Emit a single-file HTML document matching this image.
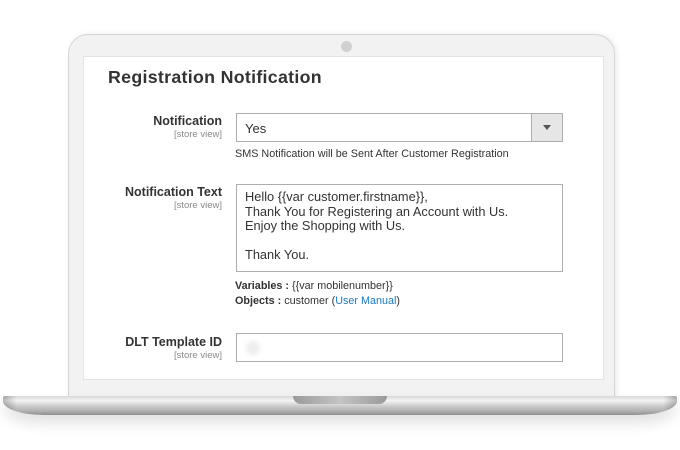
<!DOCTYPE html>
<html><head><meta charset="utf-8"><style>
*{margin:0;padding:0;box-sizing:border-box}
body{width:680px;height:450px;background:#fff;position:relative;overflow:hidden;font-family:"Liberation Sans",sans-serif;color:#303030}
.bezel{position:absolute;left:68px;top:34px;width:547px;height:365px;background:#f2f2f2;border:1px solid #d6d6d6;border-radius:20px 20px 0 0;box-shadow:2px 0 6px rgba(0,0,0,.08)}
.cam{position:absolute;left:341px;top:41px;width:11px;height:11px;border-radius:50%;background:#d0d0d0}
.screen{position:absolute;left:83px;top:56px;width:521px;height:324px;background:#fff;border:1px solid #e4e4e4}
.base{position:absolute;left:3px;top:396px;width:674px;height:19px;border-radius:2px 2px 40px 40px/2px 2px 14px 14px;background:linear-gradient(90deg,rgba(0,0,0,.25),rgba(0,0,0,0) 2%,rgba(0,0,0,0) 98%,rgba(0,0,0,.25)),linear-gradient(#d8d8d8,#f4f4f4 25%,#cfcfcf 50%,#b0b0b0 80%,#8f8f8f);box-shadow:0 8px 14px rgba(0,0,0,.12)}
.notch{position:absolute;left:293px;top:396px;width:94px;height:8px;border-radius:0 0 8px 8px;background:linear-gradient(90deg,#9a9a9a,#c4c4c4 50%,#9a9a9a)}
.t{position:absolute;white-space:nowrap}
h1{position:absolute;left:108px;top:67px;font-size:17.8px;font-weight:bold;color:#333;letter-spacing:.3px}
.lab{position:absolute;right:458px;text-align:right;font-size:12.5px;font-weight:bold;color:#333}
.lab span{display:block;font-size:9.5px;font-weight:normal;color:#8a8a8a;margin-top:1px}
.box{position:absolute;left:236px;width:327px;border:1px solid #adadad;background:#fff}
.small{font-size:10.8px;color:#333}
a{color:#1979c3;text-decoration:none}
</style></head><body>
<div class="bezel"></div>
<div class="cam"></div>
<div class="screen"></div>
<h1>Registration Notification</h1>
<div class="lab" style="top:114px">Notification<span>[store view]</span></div>
<div class="box" style="top:113px;height:29px"><div class="t" style="left:8px;top:7px;font-size:13px">Yes</div>
<div style="position:absolute;right:0;top:0;width:31px;height:27px;background:#e6e6e6;border-left:1px solid #adadad"><div style="position:absolute;left:11px;top:11px;border-left:4px solid transparent;border-right:4px solid transparent;border-top:5px solid #555"></div></div></div>
<div class="t small" style="left:235px;top:148px">SMS Notification will be Sent After Customer Registration</div>
<div class="lab" style="top:185px">Notification Text<span>[store view]</span></div>
<div class="box" style="top:184px;height:88px"><div style="position:absolute;left:8px;top:5px;font-size:12.8px;line-height:14.5px;color:#333;white-space:nowrap">Hello {{var customer.firstname}},<br>Thank You for Registering an Account with Us.<br>Enjoy the Shopping with Us.<br><br>Thank You.</div></div>
<div class="t small" style="left:235px;top:280px"><b>Variables :</b> {{var mobilenumber}}</div>
<div class="t small" style="left:235px;top:295px"><b>Objects :</b> customer (<a>User Manual</a>)</div>
<div class="lab" style="top:335px">DLT Template ID<span>[store view]</span></div>
<div class="box" style="top:333px;height:29px"><div style="position:absolute;left:9px;top:7px;width:14px;height:14px;border-radius:50%;background:#eee;filter:blur(2px)"></div></div>
<div class="base"></div>
<div class="notch"></div>
</body></html>
